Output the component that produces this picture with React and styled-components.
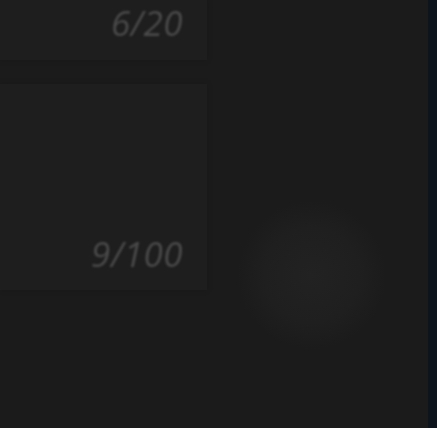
import React from 'react';
import styled, { createGlobalStyle } from 'styled-components';

const GlobalStyle = createGlobalStyle`
  html, body {
    margin: 0;
    padding: 0;
    background-color: #1b1b1b;
    font-family: 'Open Sans', 'Liberation Sans', sans-serif;
  }
`;

const Page = styled.div`
  width: 437px;
  height: 428px;
  display: flex;
  overflow: hidden;
  background-color: #1b1b1b;
`;

const Form = styled.div`
  width: 207px;
  display: flex;
  flex-direction: column;
  gap: 24px;
`;

const Field = styled.div`
  height: ${(p) => p.h}px;
  background-color: #1e1e1e;
  display: flex;
  align-items: flex-end;
  justify-content: flex-end;
  padding: 0 24px ${(p) => p.pb}px 0;
  box-sizing: border-box;
  box-shadow: 0 0 6px rgba(0, 0, 0, 0.15);
`;

const Counter = styled.span`
  font-size: 35px;
  font-style: italic;
  line-height: 1;
  color: #4a4a4a;
  letter-spacing: 0.5px;
  filter: blur(0.8px);
`;

const Side = styled.div`
  flex: 1;
  display: flex;
  justify-content: center;
  padding-top: 200px;
`;

const Glow = styled.div`
  width: 150px;
  height: 150px;
  margin-left: -12px;
  border-radius: 50%;
  background: radial-gradient(circle, #222222 0%, #1f1f1f 45%, rgba(27, 27, 27, 0) 70%);
`;

const Strip = styled.div`
  width: 9px;
  background-color: #0d141b;
`;

export default function App() {
  return (
    <Page>
      <GlobalStyle />
      <Form>
        <Field h={60} pb={20}>
          <Counter>6/20</Counter>
        </Field>
        <Field h={206} pb={19}>
          <Counter>9/100</Counter>
        </Field>
      </Form>
      <Side>
        <Glow />
      </Side>
      <Strip />
    </Page>
  );
}
